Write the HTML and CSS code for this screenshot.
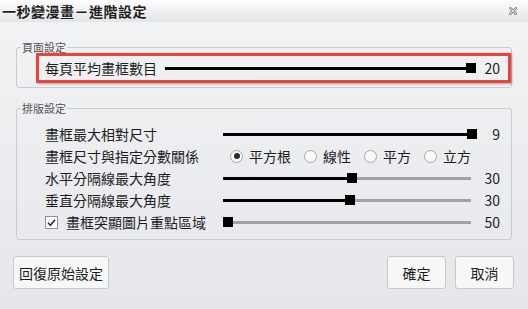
FILE: index.html
```html
<!DOCTYPE html>
<html lang="zh-Hant">
<head>
  <meta charset="UTF-8" />
  <meta name="viewport" content="width=device-width, initial-scale=1.0" />
  <title>一秒變漫畫－進階設定</title>
  <link rel="stylesheet" href="styles.css">
</head>
<body>
  <div class="dialog">
    <header class="titlebar">
      <span class="title">一秒變漫畫－進階設定</span>
      <svg class="close" viewBox="0 0 8 8" aria-label="關閉">
        <path d="M1 1 L7 7 M7 1 L1 7" stroke="#8e9093" stroke-width="2.6" stroke-linecap="square" />
        <path d="M1 1 L7 7 M7 1 L1 7" stroke="#e9eaec" stroke-width="0.9" stroke-linecap="square" />
      </svg>
    </header>

    <main class="content">
      <fieldset class="group group-page">
        <legend>頁面設定</legend>
        <div class="row highlight">
          <span class="label label-page">每頁平均畫框數目</span>
          <div class="slider slider-page">
            <span class="fill" style="width: calc((100% - 10px) * 1)"></span>
            <span class="knob"></span>
            <span class="rest"></span>
          </div>
          <span class="value">20</span>
        </div>
      </fieldset>

      <fieldset class="group group-layout">
        <legend>排版設定</legend>
        <div class="rows">
          <div class="row">
            <span class="label">畫框最大相對尺寸</span>
            <div class="slider">
              <span class="fill" style="width: calc((100% - 10px) * 1)"></span>
              <span class="knob"></span>
              <span class="rest"></span>
            </div>
            <span class="value">9</span>
          </div>
          <div class="row">
            <span class="label">畫框尺寸與指定分數關係</span>
            <div class="options">
              <label class="option"><span class="radio checked"></span>平方根</label>
              <label class="option"><span class="radio"></span>線性</label>
              <label class="option"><span class="radio"></span>平方</label>
              <label class="option"><span class="radio"></span>立方</label>
            </div>
          </div>
          <div class="row">
            <span class="label">水平分隔線最大角度</span>
            <div class="slider">
              <span class="fill" style="width: calc((100% - 10px) * 0.508)"></span>
              <span class="knob"></span>
              <span class="rest"></span>
            </div>
            <span class="value">30</span>
          </div>
          <div class="row">
            <span class="label">垂直分隔線最大角度</span>
            <div class="slider">
              <span class="fill" style="width: calc((100% - 10px) * 0.5)"></span>
              <span class="knob"></span>
              <span class="rest"></span>
            </div>
            <span class="value">30</span>
          </div>
          <div class="row">
            <label class="label check-label">
              <span class="checkbox">
                <svg viewBox="0 0 11 11"><path d="M2 5.8 L4.4 8.2 L9 2.8" fill="none" stroke="#2a2a2a" stroke-width="1.6" /></svg>
              </span>
              畫框突顯圖片重點區域
            </label>
            <div class="slider">
              <span class="fill" style="width: calc((100% - 10px) * 0)"></span>
              <span class="knob"></span>
              <span class="rest"></span>
            </div>
            <span class="value">50</span>
          </div>
        </div>
      </fieldset>

      <div class="actions">
        <button class="btn btn-reset">回復原始設定</button>
        <button class="btn btn-fixed">確定</button>
        <button class="btn btn-fixed">取消</button>
      </div>
    </main>
  </div>
</body>
</html>
```

FILE: styles.css
```css
body {
  margin: 0;
  font-family: "Noto Sans CJK TC", "Noto Sans", sans-serif;
  color: #1e1e1e;
}
.dialog {
  width: 528px;
  height: 309px;
  display: flex;
  flex-direction: column;
  background: linear-gradient(#f2f3f5, #e5e7ea);
  overflow: hidden;
}
.titlebar {
  flex: none;
  height: 22px;
  display: flex;
  align-items: center;
  justify-content: space-between;
  padding: 0 11px 0 2px;
  background: linear-gradient(#fdfdfd, #e2e4e6);
}
.title {
  font-size: 14px;
  font-weight: 700;
  letter-spacing: 0.5px;
  line-height: 22px;
}
.close {
  width: 8px;
  height: 8px;
}
.content {
  flex: 1;
  display: flex;
  flex-direction: column;
  padding: 19px 16px 0;
}
.group {
  margin: 0;
  padding: 0;
  border: 1px solid #c9cbce;
  border-radius: 3px;
  min-width: 0;
}
.group legend {
  margin-left: 4px;
  padding: 0 1px;
  font-size: 11px;
  line-height: 12px;
  color: #555;
}
.group-page {
  padding-bottom: 4px;
}
.group-layout {
  margin-top: 14px;
}
.rows {
  padding: 9px 11px 6px 28px;
}
.row {
  display: flex;
  align-items: center;
  height: 22px;
  font-size: 14px;
  line-height: 22px;
}
.highlight {
  box-sizing: border-box;
  height: 30px;
  margin-left: 19px;
  padding: 0 8px 0 6px;
  border: 3px solid #ef4139;
  box-shadow: 1px 1px 2px rgba(0, 0, 0, 0.3);
}
.label {
  flex: none;
  width: 178px;
  white-space: nowrap;
}
.label-page {
  width: 120px;
}
.slider {
  flex: none;
  width: 254px;
  height: 10px;
  display: flex;
  align-items: center;
}
.slider-page {
  width: 311px;
}
.fill {
  flex-shrink: 0;
  height: 3px;
  background: #000;
}
.knob {
  flex-shrink: 0;
  width: 10px;
  height: 10px;
  background: #000;
}
.rest {
  flex: 1;
  height: 3px;
  margin-right: 6px;
  background: #a2a2a2;
}
.value {
  flex: 1;
  text-align: right;
}
.options {
  display: flex;
  gap: 13px;
  margin-left: 7px;
}
.option {
  display: flex;
  align-items: center;
  gap: 6px;
}
.radio {
  box-sizing: border-box;
  width: 13px;
  height: 13px;
  border: 1px solid #a4a6a8;
  border-radius: 50%;
  background: #f8f8f9;
  display: grid;
  place-items: center;
}
.radio.checked::after {
  content: "";
  width: 6px;
  height: 6px;
  border-radius: 50%;
  background: #2b2b2b;
}
.check-label {
  display: flex;
  align-items: center;
  gap: 8px;
}
.checkbox {
  box-sizing: border-box;
  width: 13px;
  height: 13px;
  border: 1px solid #8f9194;
  background: #fdfdfd;
  display: grid;
  place-items: center;
}
.checkbox svg {
  width: 11px;
  height: 11px;
}
.actions {
  display: flex;
  gap: 9px;
  margin: 16px -2px 0 -3px;
}
.btn {
  height: 33px;
  padding: 0 5px;
  font-family: inherit;
  font-size: 14px;
  color: #1e1e1e;
  background: #f7f7f7;
  border: 1px solid #c6c8ca;
  border-radius: 3px;
}
.btn-reset {
  margin-right: auto;
}
.btn-fixed {
  width: 59px;
}
```
